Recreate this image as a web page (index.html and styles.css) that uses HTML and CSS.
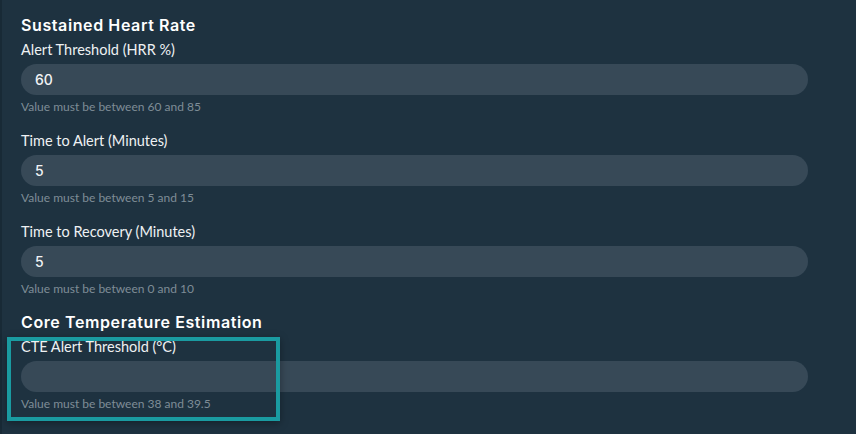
FILE: index.html
```html
<!DOCTYPE html>
<html>
<head>
<meta charset="utf-8">
<link rel="stylesheet" href="styles.css">
</head>
<body>
<div class="page">
  <h2 class="section-title">Sustained Heart Rate</h2>
  <div class="field">
    <label class="label">Alert Threshold (HRR %)</label>
    <div class="input">60</div>
    <div class="help">Value must be between 60 and 85</div>
  </div>
  <div class="field">
    <label class="label">Time to Alert (Minutes)</label>
    <div class="input">5</div>
    <div class="help">Value must be between 5 and 15</div>
  </div>
  <div class="field">
    <label class="label">Time to Recovery (Minutes)</label>
    <div class="input">5</div>
    <div class="help">Value must be between 0 and 10</div>
  </div>
  <h2 class="section-title second">Core Temperature Estimation</h2>
  <div class="field">
    <label class="label">CTE Alert Threshold (°C)</label>
    <div class="input"></div>
    <div class="help">Value must be between 38 and 39.5</div>
  </div>
  <div class="highlight"></div>
</div>
</body>
</html>
```
FILE: styles.css
```css
html, body {
  margin: 0;
  padding: 0;
  background: #1e3240;
  height: 100%;
  overflow: hidden;
}
.page {
  position: relative;
  height: 434px;
  padding: 14px 48px 0 21px;
  box-sizing: border-box;
  border-left: 2px solid #182a36;
  font-family: Lato, "Noto Sans", sans-serif;
  color: #eef1f3;
}
.section-title {
  margin: 0 0 0 -2px;
  font-family: Inter, "Noto Sans", sans-serif;
  font-size: 16px;
  line-height: 22px;
  font-weight: 600;
  letter-spacing: 0.6px;
  color: #ffffff;
}
.section-title.second {
  margin-top: 15px;
}
.field {
  display: flex;
  flex-direction: column;
  margin-left: -2px;
  margin-bottom: 13px;
}
.label {
  margin-top: 4px;
  font-size: 14.5px;
  line-height: 20px;
  color: #eef1f3;
}
.input {
  margin-top: 4px;
  height: 31px;
  border-radius: 16px;
  background: #374957;
  padding-left: 14px;
  font-family: Inter, "Noto Sans", sans-serif;
  font-size: 14px;
  line-height: 31px;
  font-weight: 500;
  color: #f1f3f5;
}
.help {
  margin-top: 5px;
  font-size: 12px;
  line-height: 14px;
  color: #7e8d97;
}
.highlight {
  position: absolute;
  left: 5px;
  top: 337px;
  width: 273px;
  height: 84px;
  box-sizing: border-box;
  border: 4px solid #1a9ba1;
  box-shadow: 0 2px 8px rgba(0,0,0,0.35);
}
```
